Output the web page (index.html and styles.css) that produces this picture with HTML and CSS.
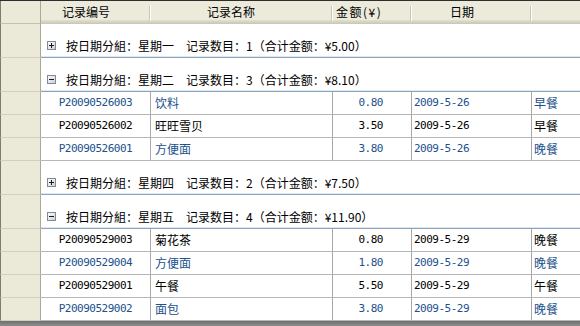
FILE: index.html
```html
<!DOCTYPE html>
<html lang="zh-CN">

<head>
  <meta charset="UTF-8" />
  <title>记录分组</title>
  <link rel="stylesheet" href="styles.css">
</head>

<body>
  <svg class="defs" width="0" height="0">
    <defs>
      <linearGradient id="tg" x1="0" y1="0" x2="1" y2="1">
        <stop offset="0" stop-color="#fff" />
        <stop offset="1" stop-color="#c9ced6" />
      </linearGradient>
    </defs>
  </svg>

  <div class="grid">
    <div class="row head">
      <div class="gut"></div>
      <div class="th c1">记录编号</div>
      <div class="th c2">记录名称</div>
      <div class="th c3">金额(¥)</div>
      <div class="th c4">日期</div>
      <div class="th c5"></div>
    </div>

    <div class="row group">
      <div class="gut"></div>
      <div class="gcell">
        <svg class="tog" width="9" height="9" viewBox="0 0 9 9"><rect x="0.5" y="0.5" width="8" height="8" fill="url(#tg)" stroke="#7f8a99"/><path d="M2 4.5h5M4.5 2v5" stroke="#1a1a1a"/></svg>
        <span>按日期分組：星期一</span><span class="cnt">记录数目：1（合计金额：¥5.00）</span>
      </div>
    </div>

    <div class="row group">
      <div class="gut"></div>
      <div class="gcell">
        <svg class="tog" width="9" height="9" viewBox="0 0 9 9"><rect x="0.5" y="0.5" width="8" height="8" fill="url(#tg)" stroke="#7f8a99"/><path d="M2 4.5h5" stroke="#1a1a1a"/></svg>
        <span>按日期分組：星期二</span><span class="cnt">记录数目：3（合计金额：¥8.10）</span>
      </div>
    </div>
    <div class="row data alt">
      <div class="gut"></div>
      <div class="td c1 num">P20090526003</div>
      <div class="td c2">饮料</div>
      <div class="td c3 num">0.80</div>
      <div class="td c4 num">2009-5-26</div>
      <div class="td c5">早餐</div>
    </div>
    <div class="row data">
      <div class="gut"></div>
      <div class="td c1 num">P20090526002</div>
      <div class="td c2">旺旺雪贝</div>
      <div class="td c3 num">3.50</div>
      <div class="td c4 num">2009-5-26</div>
      <div class="td c5">早餐</div>
    </div>
    <div class="row data alt">
      <div class="gut"></div>
      <div class="td c1 num">P20090526001</div>
      <div class="td c2">方便面</div>
      <div class="td c3 num">3.80</div>
      <div class="td c4 num">2009-5-26</div>
      <div class="td c5">晚餐</div>
    </div>

    <div class="row group">
      <div class="gut"></div>
      <div class="gcell">
        <svg class="tog" width="9" height="9" viewBox="0 0 9 9"><rect x="0.5" y="0.5" width="8" height="8" fill="url(#tg)" stroke="#7f8a99"/><path d="M2 4.5h5M4.5 2v5" stroke="#1a1a1a"/></svg>
        <span>按日期分組：星期四</span><span class="cnt">记录数目：2（合计金额：¥7.50）</span>
      </div>
    </div>

    <div class="row group">
      <div class="gut"></div>
      <div class="gcell">
        <svg class="tog" width="9" height="9" viewBox="0 0 9 9"><rect x="0.5" y="0.5" width="8" height="8" fill="url(#tg)" stroke="#7f8a99"/><path d="M2 4.5h5" stroke="#1a1a1a"/></svg>
        <span>按日期分組：星期五</span><span class="cnt">记录数目：4（合计金额：¥11.90）</span>
      </div>
    </div>
    <div class="row data">
      <div class="gut"></div>
      <div class="td c1 num">P20090529003</div>
      <div class="td c2">菊花茶</div>
      <div class="td c3 num">0.80</div>
      <div class="td c4 num">2009-5-29</div>
      <div class="td c5">晚餐</div>
    </div>
    <div class="row data alt">
      <div class="gut"></div>
      <div class="td c1 num">P20090529004</div>
      <div class="td c2">方便面</div>
      <div class="td c3 num">1.80</div>
      <div class="td c4 num">2009-5-29</div>
      <div class="td c5">晚餐</div>
    </div>
    <div class="row data">
      <div class="gut"></div>
      <div class="td c1 num">P20090529001</div>
      <div class="td c2">午餐</div>
      <div class="td c3 num">5.50</div>
      <div class="td c4 num">2009-5-29</div>
      <div class="td c5">午餐</div>
    </div>
    <div class="row data alt">
      <div class="gut"></div>
      <div class="td c1 num">P20090529002</div>
      <div class="td c2">面包</div>
      <div class="td c3 num">3.80</div>
      <div class="td c4 num">2009-5-29</div>
      <div class="td c5">晚餐</div>
    </div>
  </div>
  <div class="hbar"></div>
</body>

</html>
```

FILE: styles.css
```css
body {
  margin: 0;
  width: 580px;
  height: 326px;
  overflow: hidden;
  background: #fff;
  font-family: "Noto Sans CJK SC", sans-serif;
  font-size: 12px;
  color: #000;
}

.defs {
  display: block;
  height: 0;
}

.row {
  display: grid;
  grid-template-columns: 41px 110px 182px 79px 120px 1fr;
  box-sizing: border-box;
}

.gut {
  box-sizing: border-box;
  background-color: #ebe9d8;
  border-left: 1px solid #7e7c70;
  border-right: 1px solid #aca899;
  border-bottom: 1px solid #d3cfbc;
}

/* header */
.head {
  height: 24px;
  border-top: 1px solid #2e2e2e;
}

.head .gut {
  border-bottom: 1px solid #c5c1ae;
}

.th {
  line-height: 22px;
  white-space: nowrap;
  background:
    linear-gradient(to right, #c9c6b3 1px, #fff 1px) right 5px / 2px 15px no-repeat,
    linear-gradient(#ebeadb 0, #ebeadb 19px, #e2dfce 19px, #d7d3c2 21px, #c9c5b5 23px);
}

.th.c1 { padding-left: 21px; }
.th.c2 { padding-left: 56px; }
.th.c3 { padding-left: 3px; letter-spacing: 1.5px; }
.th.c4 { padding-left: 38px; }
.th.c5 { background: linear-gradient(#ebeadb 0, #ebeadb 19px, #e2dfce 19px, #d7d3c2 21px, #c9c5b5 23px); }

/* group rows */
.group {
  height: 34px;
}

.gcell {
  grid-column: 2 / 7;
  display: flex;
  align-items: center;
  padding: 14px 0 4px 6px;
  border-bottom: 1px solid #8ea4ba;
  box-shadow: inset 0 -1px 0 #dce8f3;
  white-space: nowrap;
  line-height: 15px;
}

.tog {
  margin-right: 10px;
  flex: none;
}

.cnt {
  margin-left: 12px;
}

/* data rows */
.data {
  height: 23px;
}

.td {
  box-sizing: border-box;
  line-height: 22px;
  border-right: 1px solid #a8a8a8;
  border-bottom: 1px solid #b6b6b6;
  white-space: nowrap;
  overflow: hidden;
}

.td.c5 {
  border-right: 0;
}

.alt .td {
  color: #21508c;
}

.num {
  font-family: "DejaVu Sans Mono", monospace;
  font-size: 11px;
  letter-spacing: -0.5px;
}

.td.c1 { text-align: center; }
.td.c2 { padding-left: 4px; }
.td.c3 { text-align: right; padding-right: 28px; }
.td.c4 { padding-left: 2px; }
.td.c5 { padding-left: 2px; }

.hbar {
  height: 5px;
  background: linear-gradient(#6f6f6f, #8d8d8d);
}
```
